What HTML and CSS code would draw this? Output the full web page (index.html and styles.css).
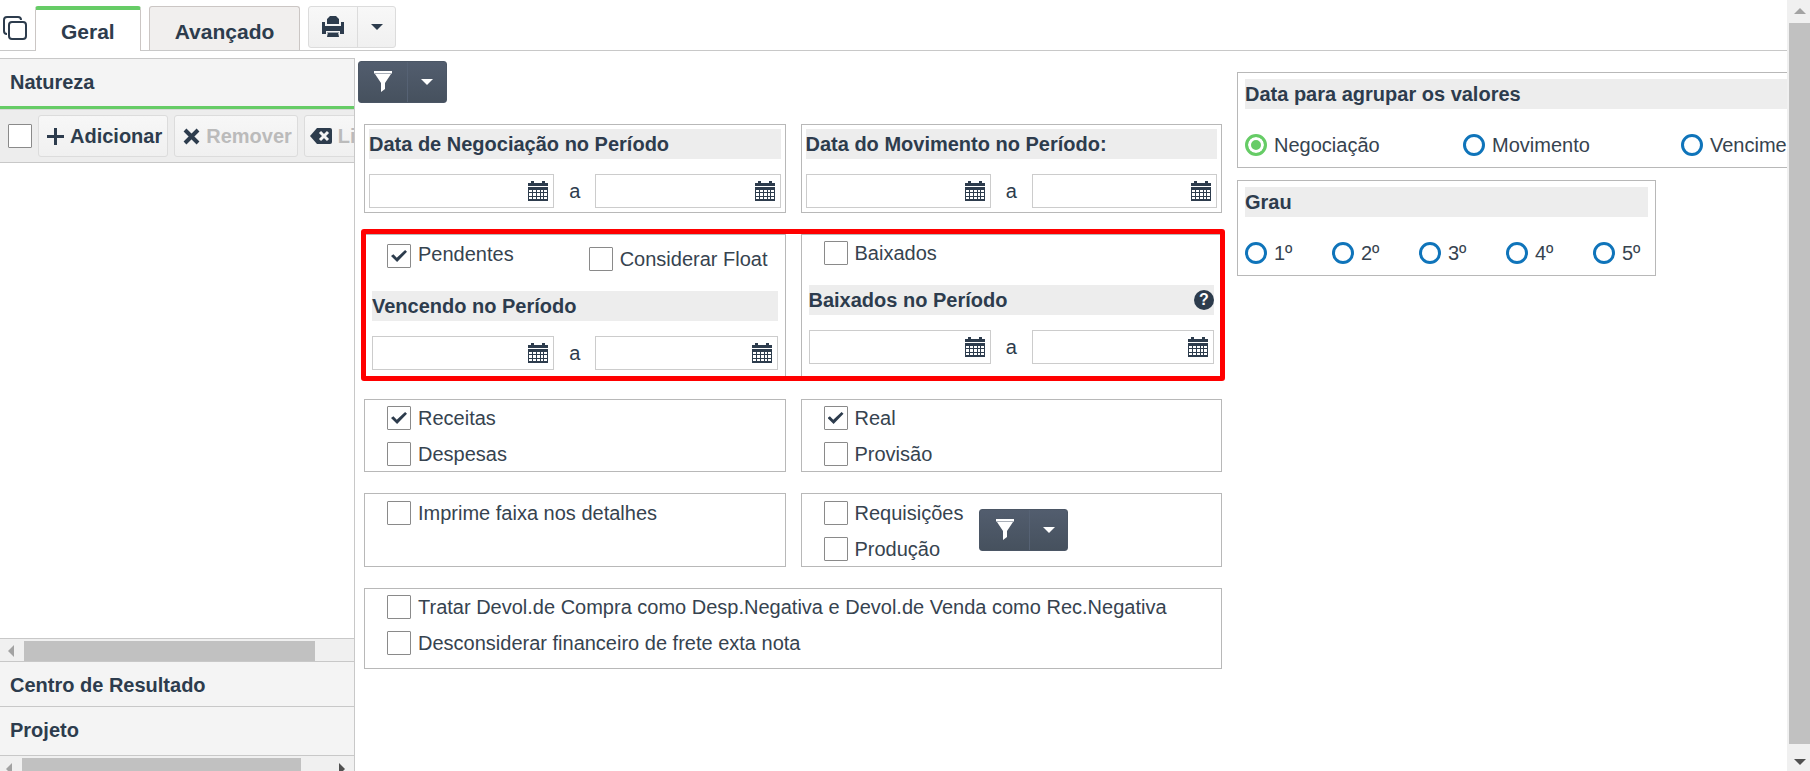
FILE: index.html
```html
<!DOCTYPE html>
<html lang="pt-BR">
<head>
    <meta charset="UTF-8">
    <meta name="viewport" content="width=device-width, initial-scale=1.0">
    <title>Filtros</title>
    <link rel="stylesheet" href="styles.css">
</head>
<body>
<svg class="sprite" aria-hidden="true">
    <symbol id="calendar" viewBox="0 0 20 20">
        <path fill="currentColor" fill-rule="evenodd" d="M3 0h3v2h8V0h3v2h3v3H0V2h3zM0 6h20v14H0zM1 9v2h3V9zM5 9v2h3V9zM9 9v2h3V9zM13 9v2h2V9zM16 9v2h3V9zM1 12v3h3v-3zM5 12v3h3v-3zM9 12v3h3v-3zM13 12v3h2v-3zM16 12v3h3v-3zM1 16v2h3v-2zM5 16v2h3v-2zM9 16v2h3v-2zM13 16v2h2v-2zM16 16v2h3v-2z"/>
    </symbol>
    <symbol id="filter" viewBox="0 0 20 22">
        <path fill="#fff" d="M1 0h18v2H1zM2 3h16l-6 9v6l-4 3v-9z"/>
        <path stroke="#a9afb8" d="M1 2.500h18"/>
    </symbol>
    <symbol id="caret" viewBox="0 0 12 6">
        <path fill="currentColor" d="M0 0h12L6 6z"/>
    </symbol>
</svg>
<div class="app">
    <div class="content">
        <header class="tabs">
            <button class="copy" type="button" aria-label="Copiar">
                <svg width="24" height="24" viewBox="0 0 24 24" fill="none" stroke="currentColor" stroke-width="2">
                    <rect x="6" y="6" width="17" height="17" rx="3"/>
                    <path d="M4 18c-2 0-3-1-3-3V4c0-2 1-3 3-3h11c2 0 3 1 3 3"/>
                </svg>
            </button>
            <button class="tab active" type="button">Geral</button>
            <button class="tab" type="button">Avançado</button>
            <div class="split">
                <button type="button" aria-label="Imprimir">
                    <svg width="22" height="22" viewBox="0 0 22 22" fill="currentColor">
                        <path d="M5 8V3l3-3h6l3 3v5zM0 6h3v4h16V6h3v12h-4v-3H4v3H0z"/>
                        <path d="M6 16h10l1 5H5z"/>
                        <path stroke="#9aa3ad" d="M5 16.500h12"/>
                    </svg>
                </button>
                <button type="button" aria-label="Opções de impressão"><svg width="12" height="6"><use href="#caret"/></svg></button>
            </div>
        </header>
        <div class="body">
            <aside class="sidebar">
                <h2 class="side-title open">Natureza</h2>
                <div class="toolbar">
                    <input type="checkbox" aria-label="Selecionar tudo">
                    <button type="button">
                        <svg width="17" height="17" viewBox="0 0 17 17"><path stroke="currentColor" stroke-width="3" d="M8.500 0v17M0 8.500h17"/></svg>
                        Adicionar
                    </button>
                    <button class="off" type="button">
                        <svg width="17" height="17" viewBox="0 0 17 17"><path stroke="currentColor" stroke-width="4" d="M2 2l13 13M15 2L2 15"/></svg>
                        Remover
                    </button>
                    <button class="off" type="button">
                        <svg width="22" height="16" viewBox="0 0 22 16"><path fill="currentColor" d="M0 8l7-8h13q2 0 2 2v12q0 2-2 2H7z"/><path stroke="#f4f4f4" stroke-width="3" d="M10 4l8 8M18 4l-8 8"/></svg>
                        Limpar
                    </button>
                </div>
                <div class="list"></div>
                <div class="hbar">
                    <svg class="arrow" width="6" height="12"><path fill="#a3a3a3" d="M6 0v12L0 6z"/></svg>
                    <div class="thumb"></div>
                </div>
                <h2 class="side-title">Centro de Resultado</h2>
                <h2 class="side-title last">Projeto</h2>
                <div class="hbar cut">
                    <svg class="arrow" width="6" height="12"><path fill="#a3a3a3" d="M6 0v12L0 6z"/></svg>
                    <div class="thumb"></div>
                    <svg class="arrow" width="6" height="12"><path fill="#505050" d="M0 0v12l6-6z"/></svg>
                </div>
            </aside>
            <main class="main">
                <div class="left">
                    <div class="split dark">
                        <button type="button" aria-label="Filtrar"><svg width="20" height="22"><use href="#filter"/></svg></button>
                        <button type="button" aria-label="Opções do filtro"><svg width="12" height="6"><use href="#caret"/></svg></button>
                    </div>
                    <div class="groups">
                        <div class="pair">
                            <section class="group">
                                <h3>Data de Negociação no Período</h3>
                                <div class="period">
                                    <div class="date"><input type="text" aria-label="Negociação de"><button type="button" aria-label="Calendário"><svg width="20" height="20"><use href="#calendar"/></svg></button></div>
                                    <span>a</span>
                                    <div class="date"><input type="text" aria-label="Negociação até"><button type="button" aria-label="Calendário"><svg width="20" height="20"><use href="#calendar"/></svg></button></div>
                                </div>
                            </section>
                            <section class="group">
                                <h3>Data do Movimento no Período:</h3>
                                <div class="period">
                                    <div class="date"><input type="text" aria-label="Movimento de"><button type="button" aria-label="Calendário"><svg width="20" height="20"><use href="#calendar"/></svg></button></div>
                                    <span>a</span>
                                    <div class="date"><input type="text" aria-label="Movimento até"><button type="button" aria-label="Calendário"><svg width="20" height="20"><use href="#calendar"/></svg></button></div>
                                </div>
                            </section>
                        </div>
                        <div class="pair marked">
                            <section class="group wide">
                                <div class="checks line pending">
                                    <label class="raised"><input type="checkbox" checked>Pendentes</label>
                                    <label><input type="checkbox">Considerar Float</label>
                                </div>
                                <h3>Vencendo no Período</h3>
                                <div class="period">
                                    <div class="date"><input type="text" aria-label="Vencendo de"><button type="button" aria-label="Calendário"><svg width="20" height="20"><use href="#calendar"/></svg></button></div>
                                    <span>a</span>
                                    <div class="date"><input type="text" aria-label="Vencendo até"><button type="button" aria-label="Calendário"><svg width="20" height="20"><use href="#calendar"/></svg></button></div>
                                </div>
                            </section>
                            <section class="group wide">
                                <div class="checks line">
                                    <label><input type="checkbox">Baixados</label>
                                </div>
                                <h3>Baixados no Período <button class="help" type="button" aria-label="Ajuda">?</button></h3>
                                <div class="period">
                                    <div class="date"><input type="text" aria-label="Baixados de"><button type="button" aria-label="Calendário"><svg width="20" height="20"><use href="#calendar"/></svg></button></div>
                                    <span>a</span>
                                    <div class="date"><input type="text" aria-label="Baixados até"><button type="button" aria-label="Calendário"><svg width="20" height="20"><use href="#calendar"/></svg></button></div>
                                </div>
                            </section>
                        </div>
                        <div class="pair">
                            <section class="group checks">
                                <label><input type="checkbox" checked>Receitas</label>
                                <label><input type="checkbox">Despesas</label>
                            </section>
                            <section class="group checks">
                                <label><input type="checkbox" checked>Real</label>
                                <label><input type="checkbox">Provisão</label>
                            </section>
                        </div>
                        <div class="pair">
                            <section class="group checks low">
                                <label><input type="checkbox">Imprime faixa nos detalhes</label>
                            </section>
                            <section class="group with-filter">
                                <div class="checks">
                                    <label><input type="checkbox">Requisições</label>
                                    <label><input type="checkbox">Produção</label>
                                </div>
                                <div class="split dark">
                                    <button type="button" aria-label="Filtrar"><svg width="20" height="22"><use href="#filter"/></svg></button>
                                    <button type="button" aria-label="Opções do filtro"><svg width="12" height="6"><use href="#caret"/></svg></button>
                                </div>
                            </section>
                        </div>
                        <section class="group checks tall">
                            <label><input type="checkbox">Tratar Devol.de Compra como Desp.Negativa e Devol.de Venda como Rec.Negativa</label>
                            <label><input type="checkbox">Desconsiderar financeiro de frete exta nota</label>
                        </section>
                    </div>
                </div>
                <div class="right">
                    <section class="group radios by-date">
                        <h3>Data para agrupar os valores</h3>
                        <div class="options">
                            <label><input type="radio" name="data" checked>Negociação</label>
                            <label><input type="radio" name="data">Movimento</label>
                            <label><input type="radio" name="data">Vencimento</label>
                        </div>
                    </section>
                    <section class="group radios degree">
                        <h3>Grau</h3>
                        <div class="options">
                            <label><input type="radio" name="grau">1º</label>
                            <label><input type="radio" name="grau">2º</label>
                            <label><input type="radio" name="grau">3º</label>
                            <label><input type="radio" name="grau">4º</label>
                            <label><input type="radio" name="grau">5º</label>
                        </div>
                    </section>
                </div>
            </main>
        </div>
    </div>
    <div class="vbar">
        <svg width="12" height="6"><path fill="#a3a3a3" d="M0 6h12L6 0z"/></svg>
        <div class="thumb"></div>
        <svg width="12" height="6"><path fill="#505050" d="M0 0h12L6 6z"/></svg>
    </div>
</div>
</body>
</html>
```
FILE: styles.css
```css
*{
    box-sizing: border-box;
}

body{
    margin: 0;
    font-family: "Liberation Sans", Arial, sans-serif;
    font-size: 20px;
    line-height: 24px;
    color: #2d3c4d;
    background-color: #fff;
}

h2, h3{
    margin: 0;
    font-size: 20px;
    font-weight: 700;
}

button{
    margin: 0;
    padding: 0;
    border: 0;
    font: inherit;
    color: inherit;
    background: none;
    cursor: pointer;
}

svg{
    display: block;
    flex: none;
}

.sprite{
    position: absolute;
    width: 0;
    height: 0;
}

.app{
    display: flex;
    height: 100vh;
    overflow: hidden;
}

.content{
    display: flex;
    flex: 1;
    flex-direction: column;
    min-width: 0;
}

/* tabs */
.tabs{
    display: flex;
    gap: 8px;
    padding: 6px 0 0 3px;
    border-bottom: 1px solid #c8c8c8;
}

.tab{
    padding: 6px 25px 0;
    border: 1px solid #cbc6c4;
    border-bottom: 0;
    border-radius: 3px 3px 0 0;
    height: 44px;
    font-size: 21px;
    font-weight: 700;
    background-color: #f1efee;
}

.tab.active{
    margin-bottom: -1px;
    border-top: 4px solid #66cc66;
    height: 45px;
    padding-top: 2px;
    background-color: #fff;
}

.split{
    display: flex;
    width: 88px;
    height: 42px;
    border: 1px solid #dcdcdc;
    border-radius: 3px;
    background: linear-gradient(#f8f8f8, #f0f0f0);
}

.split button{
    display: flex;
    align-items: center;
    justify-content: center;
    flex: 49;
}

.split button + button{
    flex: 38;
    border-left: 1px solid #dcdcdc;
}

.split.dark{
    border-color: #4b5665;
    color: #fff;
    background: linear-gradient(#525d6e, #46515e);
}

.split.dark button + button{
    border-color: #566274;
}

.body{
    display: flex;
    flex: 1;
    min-height: 0;
}

/* sidebar */
.sidebar{
    display: flex;
    flex: none;
    flex-direction: column;
    margin-top: 7px;
    border-top: 1px solid #c8c8c8;
    border-right: 1px solid #c8c8c8;
    width: 355px;
    overflow: hidden;
}

.side-title{
    padding: 11px 10px;
    border-bottom: 1px solid #c8c8c8;
    height: 45px;
    background-color: #f4f4f4;
}

.side-title.open{
    border-bottom: 3px solid #66cc66;
    height: 50px;
}

.side-title.last{
    height: 49px;
}

.toolbar{
    display: flex;
    align-items: center;
    gap: 6px;
    padding: 5px 0 5px 8px;
    border-top: 1px solid #d8d8d8;
    border-bottom: 1px solid #c8c8c8;
    background-color: #ededed;
}

.toolbar button{
    display: flex;
    align-items: center;
    flex: none;
    gap: 6px;
    padding: 0 5px 0 8px;
    border: 1px solid #dcdcdc;
    border-radius: 3px;
    height: 42px;
    font-weight: 700;
    background: linear-gradient(#f7f7f7, #f0f0f0);
}

.toolbar .off{
    color: #bbb;
}

.toolbar .off svg{
    color: #2d3c4d;
}

.toolbar .off + .off{
    padding-left: 5px;
}

.list{
    flex: 1;
    border-bottom: 1px solid #c8c8c8;
}

.hbar{
    display: flex;
    align-items: center;
    gap: 10px;
    padding: 2px 39px 0 8px;
    border-bottom: 1px solid #c8c8c8;
    height: 23px;
    background-color: #f0f0f0;
}

.thumb{
    flex: 1;
    align-self: stretch;
    background-color: #c1c1c1;
}

.hbar.cut{
    padding: 2px 9px 0 6px;
    border: 0;
    height: 15px;
    align-items: flex-start;
}

.cut .arrow{
    margin-top: 5px;
}

.cut .arrow:last-child{
    margin-left: 28px;
}

/* main form */
.main{
    display: grid;
    grid-template-columns: minmax(0, 864fr) minmax(0, 550fr);
    gap: 15px;
    flex: 1;
    min-width: 0;
    padding: 10px 0 0 3px;
    overflow: hidden;
}

.left .split{
    width: 89px;
}

.groups{
    display: flex;
    flex-direction: column;
    gap: 21px;
    padding: 21px 0 0 6px;
}

.pair{
    display: grid;
    grid-template-columns: repeat(2, minmax(0, 1fr));
    gap: 15px;
}

.group{
    padding: 4px;
    border: 1px solid #b8b8b8;
}

.group h3{
    display: flex;
    align-items: center;
    justify-content: space-between;
    height: 30px;
    background-color: #ededed;
}

.period{
    display: flex;
    align-items: center;
    gap: 15px;
    margin-top: 15px;
}

.date{
    display: flex;
    flex: 1;
    align-items: center;
    border: 1px solid #ccc;
    height: 34px;
    min-width: 0;
    padding-right: 5px;
}

.date input{
    flex: 1;
    min-width: 0;
    height: 32px;
    padding: 0 6px;
    border: 0;
    outline: 0;
    font: inherit;
    background: none;
}

.wide{
    padding: 6px 7px 7px;
}

/* highlight frame round the open and settled titles */
.marked{
    position: relative;
    height: 144px;
}

.marked::after{
    content: "";
    position: absolute;
    inset: -5px -3px -3px;
    border: 5px solid #f00;
    border-radius: 3px;
    pointer-events: none;
}

.checks{
    display: flex;
    flex-direction: column;
    align-items: flex-start;
    gap: 12px;
    padding: 6px 22px 5px;
}

.low{
    padding-top: 7px;
}

label{
    display: flex;
    align-items: center;
    gap: 7px;
    white-space: nowrap;
    color: #36434f;
}

input[type=checkbox]{
    display: flex;
    align-items: center;
    justify-content: center;
    flex: none;
    appearance: none;
    margin: 0;
    border: 1px solid #8a8a8a;
    border-radius: 1px;
    width: 24px;
    height: 24px;
    background-color: #fff;
}

input[type=checkbox]:checked::before{
    content: "";
    width: 16px;
    height: 12px;
    background-color: #2d3c4d;
    clip-path: polygon(0 50%, 15% 35%, 36% 65%, 88% 0, 100% 15%, 38% 100%);
}

.line{
    flex-direction: row;
    justify-content: space-between;
    padding: 0 10px 20px 15px;
}

.pending{
    align-items: flex-end;
    padding-top: 3px;
}

.raised{
    align-items: flex-start;
    margin-bottom: 3px;
    line-height: 20px;
}

.help{
    border-radius: 50%;
    width: 20px;
    height: 20px;
    font-size: 16px;
    font-weight: 700;
    line-height: 20px;
    color: #fff;
    background-color: #2d3c4d;
}

.with-filter{
    display: flex;
    align-items: center;
    gap: 16px;
    padding: 0 0 0 22px;
}

.with-filter .checks{
    padding: 7px 0 5px;
}

.tall{
    padding: 6px 22px 13px;
}

/* radios */
.right{
    display: flex;
    flex-direction: column;
    align-items: flex-start;
    gap: 12px;
    padding-top: 11px;
}

.radios{
    padding: 6px 7px 10px;
}

.by-date{
    min-width: 660px;
}

.options{
    display: grid;
    grid-template-columns: repeat(3, 218px);
    margin-top: 24px;
}

.degree{
    width: 419px;
}

.degree .options{
    grid-template-columns: repeat(5, 87px);
}

input[type=radio]{
    appearance: none;
    margin: 0;
    border: 3px solid #0f74ba;
    border-radius: 50%;
    width: 22px;
    height: 22px;
    background-color: #fff;
}

input[type=radio]:checked{
    border-color: #66cc66;
    background-color: #66cc66;
    box-shadow: inset 0 0 0 3px #fff;
}

/* page scrollbar */
.vbar{
    display: flex;
    flex: none;
    flex-direction: column;
    align-items: center;
    gap: 9px;
    padding: 8px 0 6px 2px;
    width: 23px;
    background-color: #f0f0f0;
}

.vbar .thumb{
    margin-bottom: 6px;
}
```
